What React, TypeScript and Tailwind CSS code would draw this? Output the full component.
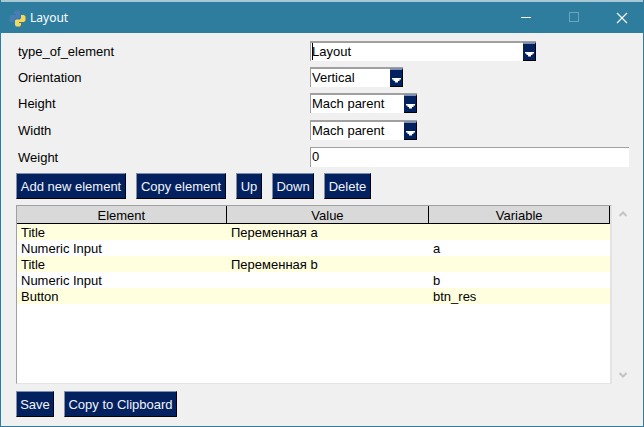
const FONT = "font-['Liberation_Sans',Arial,sans-serif]"

const rows = [
  { element: "Title", value: "Переменная а", variable: "", striped: true },
  { element: "Numeric Input", value: "", variable: "a", striped: false },
  { element: "Title", value: "Переменная b", variable: "", striped: true },
  { element: "Numeric Input", value: "", variable: "b", striped: false },
  { element: "Button", value: "", variable: "btn_res", striped: true },
]

function PythonLogo() {
  return (
    <svg width="17" height="17" viewBox="0 0 17 17">
      <path d="M6 0.500H10L11 2V7L10 8.500H6L4.500 10V12H2L0.500 10.500V6.500L2 5H7V4H5V2Z" fill="#4b7db3" />
      <path d="M12 5H15L16.500 6.500V10.500L15 12H10V13H12V15L11 16.500H7L6 15V10.500L7 9.500H11L12 8Z" fill="#f4d85e" />
    </svg>
  )
}

function Button({ label, width }: { label: string; width: string }) {
  return (
    <button
      className={`${width} h-[26px] shrink-0 whitespace-nowrap bg-[#03215f] border border-t-[#7f8fb0] border-l-[#7f8fb0] border-r-black border-b-black text-[#f2f5fa] text-[13px] leading-none text-center`}
    >
      {label}
    </button>
  )
}

function Select({ value, width, caret }: { value: string; width: string; caret?: boolean }) {
  return (
    <div className={`${width} h-[20px] flex bg-white border-t-2 border-l border-t-[#a0a0a0] border-l-[#a0a0a0]`}>
      <div className="flex-1 relative pl-[1px] text-[13px] leading-[17px] text-black">
        {caret && <span className="absolute left-[1px] top-0 w-[1px] h-[17px] bg-black" />}
        {value}
      </div>
      <div className="w-[13px] -mt-[1px] bg-[#03215f] border-r border-b border-black border-t-2 border-t-[#7f8fb0] flex items-end justify-center pb-[2px]">
        <svg width="9" height="6" viewBox="0 0 9 6">
          <path d="M0 0H9V1.500H7.500V3H6V4.500H3V3H1.500V1.500H0Z" fill="#ffffff" />
        </svg>
      </div>
    </div>
  )
}

function Row({ label, className, children }: { label: string; className: string; children: React.ReactNode }) {
  return (
    <div className={`flex items-center ${className}`}>
      <div className="w-[294px] pl-[2px] text-[13px] leading-none text-black">{label}</div>
      {children}
    </div>
  )
}

export default function App() {
  return (
    <div className={`${FONT} w-[644px] h-[427px] overflow-hidden bg-[#f0f0f0] border-x border-b border-[#2e7d9e] flex flex-col`}>
      <div className="h-[2px] -mx-[1px] bg-[#a9c8d6]" />
      <div className="h-[31px] -mx-[1px] bg-[#2e7d9e] flex items-center shrink-0">
        <div className="ml-[9px] mr-[4px] mt-[1px]">
          <PythonLogo />
        </div>
        <span className="text-white text-[12px] font-['Noto_Sans',sans-serif]">Layout</span>
        <div className="ml-auto flex items-center">
          <svg width="12" height="12" viewBox="0 0 12 12" className="mr-[36px]">
            <rect x="1" y="5" width="10" height="1" fill="#ffffff" />
          </svg>
          <svg width="12" height="12" viewBox="0 0 12 12" className="mr-[36px]">
            <rect x="1.500" y="0.500" width="9" height="9" fill="none" stroke="#6ea5bc" />
          </svg>
          <svg width="12" height="12" viewBox="0 0 12 12" className="mr-[16px]">
            <path d="M1 1L11 11M11 1L1 11" stroke="#ffffff" strokeWidth="1.100" />
          </svg>
        </div>
      </div>

      <div className="flex-1 pl-[15px] relative">
        <Row label="type_of_element" className="mt-[8px]">
          <Select value="Layout" width="w-[226px]" caret />
        </Row>
        <Row label="Orientation" className="mt-[6px]">
          <Select value="Vertical" width="w-[93px]" />
        </Row>
        <Row label="Height" className="mt-[6px]">
          <Select value="Mach parent" width="w-[107px]" />
        </Row>
        <Row label="Width" className="mt-[7px]">
          <Select value="Mach parent" width="w-[107px]" />
        </Row>
        <Row label="Weight" className="mt-[7px]">
          <div className="w-[319px] h-[20px] bg-white border-t border-l border-[#a0a0a0] pl-[1px] text-[13px] leading-[18px] text-black">
            0
          </div>
        </Row>

        <div className="flex gap-[10px] mt-[6px]">
          <Button label="Add new element" width="w-[110px]" />
          <Button label="Copy element" width="w-[90px]" />
          <Button label="Up" width="w-[26px]" />
          <Button label="Down" width="w-[42px]" />
          <Button label="Delete" width="w-[47px]" />
        </div>

        <div className="flex mt-[6px]">
          <div className="w-[596px] h-[179px] bg-white border-t border-l border-[#a0a0a0] border-r-2 border-r-[#e3e3e3] border-b border-b-[#e3e3e3]">
            <div className="flex h-[18px] bg-[#d9d9d9] border-b border-black text-[13px] leading-[19px] text-center text-black">
              <div className="w-[210px] border-r border-black">Element</div>
              <div className="w-[203px] border-r border-black">Value</div>
              <div className="w-[181px] border-r border-black">Variable</div>
            </div>
            {rows.map((row, i) => (
              <div key={i} className={`flex h-[16px] text-[13px] leading-[18px] text-black ${row.striped ? "bg-[#ffffe0]" : "bg-white"}`}>
                <div className="w-[210px] pl-[4px]">{row.element}</div>
                <div className="w-[203px] pl-[4px]">{row.value}</div>
                <div className="pl-[3px]">{row.variable}</div>
              </div>
            ))}
          </div>
          <div className="flex flex-col justify-between w-[20px] h-[179px] items-center pl-[1px] py-[6px]">
            <svg width="8" height="6" viewBox="0 0 8 6">
              <path d="M0.500 5L4 1.500L7.500 5" fill="none" stroke="#c4c4c4" strokeWidth="2" />
            </svg>
            <svg width="8" height="6" viewBox="0 0 8 6">
              <path d="M0.500 1L4 4.500L7.500 1" fill="none" stroke="#c4c4c4" strokeWidth="2" />
            </svg>
          </div>
        </div>

        <div className="flex gap-[10px] mt-[7px]">
          <Button label="Save" width="w-[38px]" />
          <Button label="Copy to Clipboard" width="w-[113px]" />
        </div>
      </div>
    </div>
  )
}
